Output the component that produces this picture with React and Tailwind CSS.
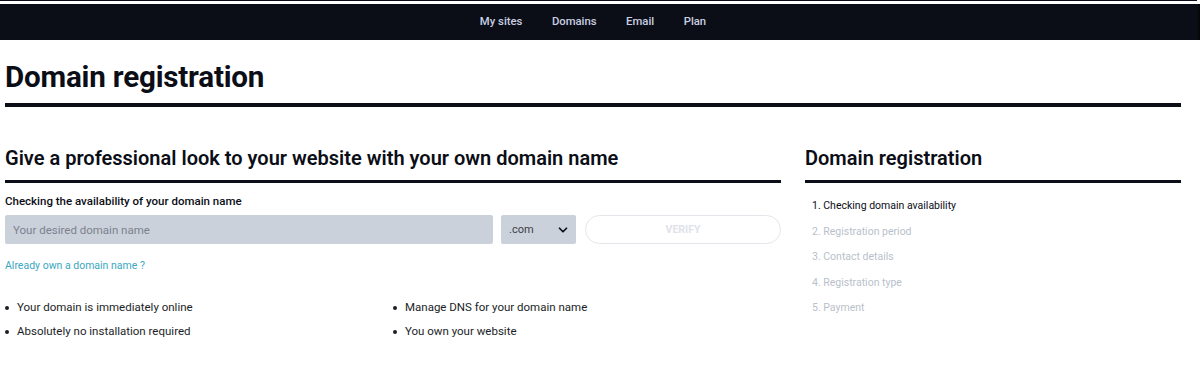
import { ChevronDown } from "lucide-react";

const navItems = ["My sites", "Domains", "Email", "Plan"];

const steps = [
  "1. Checking domain availability",
  "2. Registration period",
  "3. Contact details",
  "4. Registration type",
  "5. Payment",
];

const perks = [
  "Your domain is immediately online",
  "Manage DNS for your domain name",
  "Absolutely no installation required",
  "You own your website",
];

export default function App() {
  return (
    <div className="min-h-screen bg-white font-['Roboto',sans-serif] text-[#0b0e16]">
      {/* top bar */}
      <div className="h-[1px] w-[1197px] bg-[#0b0e16]" />
      <div className="h-[3px]" />
      <nav className="flex h-[36px] w-[1200px] items-center justify-center gap-[29.5px] border-r-2 border-[#05070b] bg-[#0b0e16] pr-[12px]">
        {navItems.map((item) => (
          <span key={item} className="text-[11.3px] font-medium text-[#c9cfe2]">
            {item}
          </span>
        ))}
      </nav>

      <div className="w-[1176px] pl-[5px] box-content">
        <h1 className="pt-[20px] text-[29.6px] font-bold leading-[34px] tracking-[-0.2px]">Domain registration</h1>
        <div className="mt-[9px] h-[4px] bg-[#0b0e16]" />

        <div className="mt-[38px] flex gap-[24px]">
          {/* main column */}
          <div className="w-[776px]">
            <h2 className="text-[20px] font-semibold leading-[26px]">
              Give a professional look to your website with your own domain name
            </h2>
            <div className="mt-[9px] h-[3px] bg-[#0b0e16]" />

            <div className="mt-[10px] text-[11.5px] font-medium">Checking the availability of your domain name</div>
            <div className="mt-[5px] flex gap-[8px]">
              <input
                className="h-[29px] w-[488px] rounded-[2px] bg-[#cbd1db] px-[8px] text-[11.5px] outline-none placeholder:text-[#7c818f]"
                placeholder="Your desired domain name"
              />
              <div className="flex h-[29px] w-[75px] items-center justify-between rounded-[2px] bg-[#cbd1db] pl-[8px] pr-[6px] text-[11px] text-[#3b3f48]">
                .com
                <ChevronDown size={14} strokeWidth={3} className="text-[#0b0e16]" />
              </div>
              <button className="ml-[1px] h-[29px] flex-1 rounded-full border border-[#e4e6eb] text-[10.5px] font-bold text-[#dfe2ea]">
                VERIFY
              </button>
            </div>

            <div className="mt-[14px] text-[10.5px] text-[#3aa7bf]">Already own a domain name ?</div>

            <ul className="mt-[26px] grid grid-cols-2 gap-y-[9px] text-[11.5px] text-[#1b1e26]">
              {perks.map((p) => (
                <li key={p} className="flex items-center gap-[8px] leading-[15px]">
                  <span className="h-[4px] w-[4px] rounded-full bg-[#1b1e26]" />
                  {p}
                </li>
              ))}
            </ul>
          </div>

          {/* sidebar */}
          <div className="w-[376px]">
            <h2 className="text-[20px] font-semibold leading-[26px]">Domain registration</h2>
            <div className="mt-[9px] h-[3px] bg-[#0b0e16]" />
            <ol className="mt-[16px] flex flex-col gap-[11px] pl-[7px] text-[10.5px]">
              {steps.map((s, i) => (
                <li key={s} className={`leading-[14.5px] ${i === 0 ? "text-[#0b0e16]" : "text-[#b9bfcb]"}`}>
                  {s}
                </li>
              ))}
            </ol>
          </div>
        </div>
      </div>
    </div>
  );
}
